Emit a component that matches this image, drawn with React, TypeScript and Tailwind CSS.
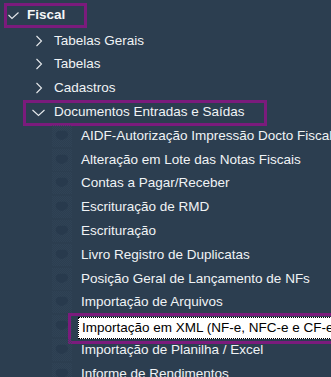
import React from "react";

const font = { fontFamily: '"Liberation Sans", Arial, sans-serif' };

function ChevronRight() {
  return (
    <svg width="8" height="12" viewBox="0 0 8 12" className="shrink-0">
      <path d="M1.5 1 L6.5 6 L1.5 11" fill="none" stroke="#e6e9ec" strokeWidth="1.1" />
    </svg>
  );
}

function ChevronDown({ w = 13 }: { w?: number }) {
  return (
    <svg width={w} height="8" viewBox="0 0 13 8" className="shrink-0">
      <path d="M0.5 1 L6.5 6.5 L12.5 1" fill="none" stroke="#e6e9ec" strokeWidth="1.1" />
    </svg>
  );
}

function Check() {
  return (
    <svg width="11" height="8" viewBox="0 0 11 8" className="shrink-0">
      <path d="M0.5 3 L4 6.5 L10.5 0.5" fill="none" stroke="#e6e9ec" strokeWidth="1.1" />
    </svg>
  );
}

function Blob() {
  return (
    <svg width="20" height="22" viewBox="0 0 20 22" className="shrink-0">
      <defs>
        <pattern id="dith" width="2" height="2" patternUnits="userSpaceOnUse">
          <rect x="0" y="0" width="1" height="1" fill="#33465a" />
          <rect x="1" y="1" width="1" height="1" fill="#33465a" />
        </pattern>
      </defs>
      <rect x="0" y="0" width="20" height="22" fill="url(#dith)" opacity="0.6" />
      <path d="M4 8 Q6 5 10 6 Q15 5 16 9 Q16 13 12 14 Q10 16 7 14 Q3 13 4 8 Z" fill="#283a4d" />
    </svg>
  );
}

const level2 = [
  "AIDF-Autorização Impressão Docto Fiscal",
  "Alteração em Lote das Notas Fiscais",
  "Contas a Pagar/Receber",
  "Escrituração de RMD",
  "Escrituração",
  "Livro Registro de Duplicatas",
  "Posição Geral de Lançamento de NFs",
  "Importação de Arquivos",
];

const level2b = ["Importação de Planilha / Excel", "Informe de Rendimentos"];

function Row({ children }: { children: React.ReactNode }) {
  return <div className="h-[23.8px] flex items-center whitespace-nowrap">{children}</div>;
}

function L2({ text }: { text: string }) {
  return (
    <Row>
      <div className="ml-[52px] flex items-center">
        <Blob />
      </div>
      <span className="ml-[9px] text-[13.5px] text-[#f0f3f5]">{text}</span>
    </Row>
  );
}

export default function App() {
  return (
    <div className="w-[331px] h-[377px] bg-[#2c3e50] overflow-hidden pt-[5px]" style={font}>
      <Row>
        <div className="ml-[4px] -mt-[3px] h-[25px] w-[83px] border-[3px] border-[#7b1b7c] flex items-center">
          <div className="ml-[1px] mt-[1px]">
            <Check />
          </div>
          <span className="ml-[8px] text-[13.5px] font-bold text-[#f4f6f8]">Fiscal</span>
        </div>
      </Row>
      {["Tabelas Gerais", "Tabelas", "Cadastros"].map((t) => (
        <Row key={t}>
          <div className="ml-[35px] flex items-center">
            <ChevronRight />
          </div>
          <span className="ml-[11px] text-[13.5px] text-[#f0f3f5]">{t}</span>
        </Row>
      ))}
      <Row>
        <div className="ml-[23px] mt-[1px] h-[26px] w-[244px] border-[3px] border-[#7b1b7c] flex items-center">
          <div className="ml-[6px] mt-[1px]">
            <ChevronDown />
          </div>
          <span className="ml-[9px] text-[13.5px] text-[#f0f3f5]">Documentos Entradas e Saídas</span>
        </div>
      </Row>
      {level2.map((t) => (
        <L2 key={t} text={t} />
      ))}
      <Row>
        <div className="ml-[52px] flex items-center">
          <Blob />
        </div>
        <div className="-ml-[4px] mt-[4px] h-[31px] w-[300px] shrink-0 border-[3px] border-r-0 border-[#7b1b7c] flex items-center pl-[7px]">
          <div className="h-[22px] w-[290px] shrink-0 bg-white border border-dotted border-black flex items-center pl-[3px] -mt-[1px]">
            <span className="text-[13.5px] text-black">Importação em XML (NF-e, NFC-e e CF-e)</span>
          </div>
        </div>
      </Row>
      {level2b.map((t) => (
        <L2 key={t} text={t} />
      ))}
    </div>
  );
}
